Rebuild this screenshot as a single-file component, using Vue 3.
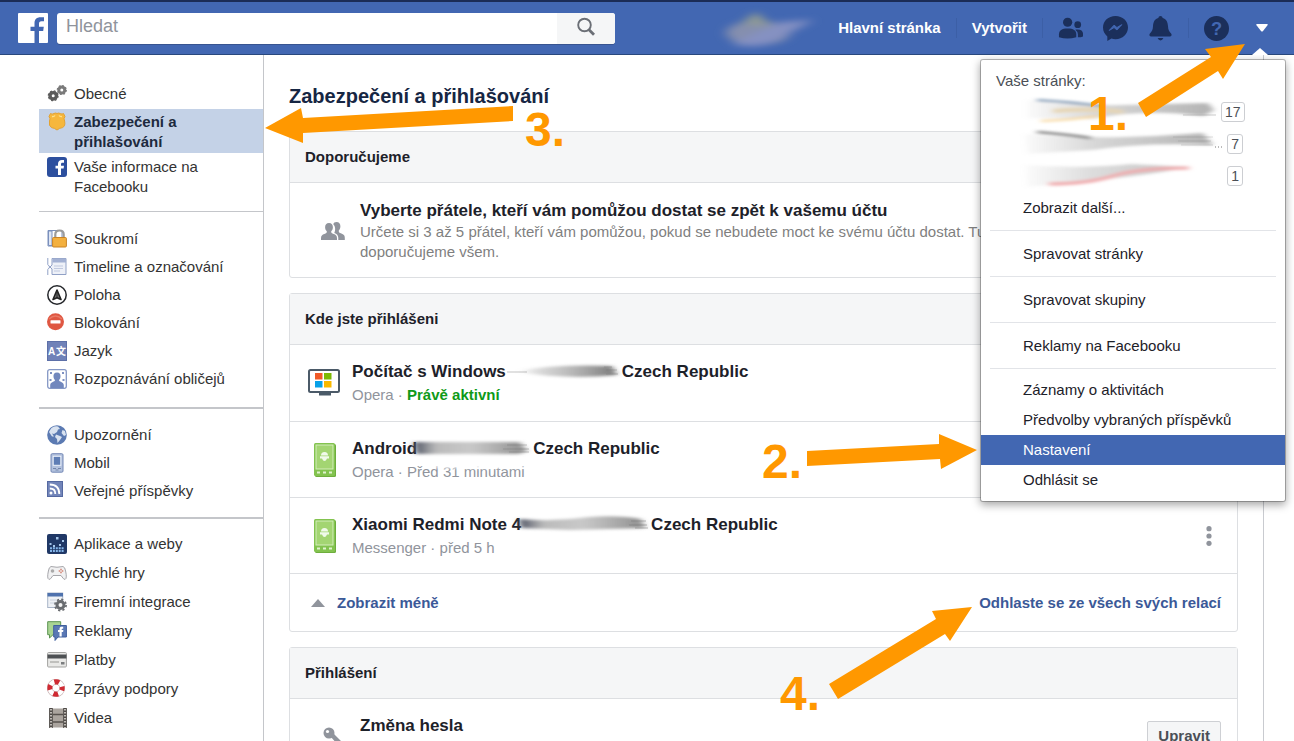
<script setup>
const sections = [
  {
    id: 'general',
    items: [
      { icon: 'gears', label: 'Obecné' },
      { icon: 'badge', label: 'Zabezpečení a přihlašování', active: true },
      { icon: 'facebook', label: 'Vaše informace na Facebooku' },
    ],
  },
  {
    id: 'privacy',
    items: [
      { icon: 'lock', label: 'Soukromí' },
      { icon: 'timeline', label: 'Timeline a označování' },
      { icon: 'location', label: 'Poloha' },
      { icon: 'block', label: 'Blokování' },
      { icon: 'language', label: 'Jazyk' },
      { icon: 'face', label: 'Rozpoznávání obličejů' },
    ],
  },
  {
    id: 'notify',
    items: [
      { icon: 'globe', label: 'Upozornění' },
      { icon: 'mobile', label: 'Mobil' },
      { icon: 'rss', label: 'Veřejné příspěvky' },
    ],
  },
  {
    id: 'apps',
    items: [
      { icon: 'apps', label: 'Aplikace a weby' },
      { icon: 'gamepad', label: 'Rychlé hry' },
      { icon: 'business', label: 'Firemní integrace' },
      { icon: 'ads', label: 'Reklamy' },
      { icon: 'card', label: 'Platby' },
      { icon: 'support', label: 'Zprávy podpory' },
      { icon: 'film', label: 'Videa' },
    ],
  },
]

const sessions = [
  { id: 'pc', device: 'Počítač s Windows', place: 'Czech Republic', app: 'Opera', when: 'Právě aktivní', active: true },
  { id: 'android', device: 'Android', place: 'Czech Republic', app: 'Opera', when: 'Před 31 minutami' },
  { id: 'xiaomi', device: 'Xiaomi Redmi Note 4', place: 'Czech Republic', app: 'Messenger', when: 'před 5 h' },
]

const single = ['Spravovat stránky', 'Spravovat skupiny', 'Reklamy na Facebooku']
const account = ['Záznamy o aktivitách', 'Předvolby vybraných příspěvků', 'Nastavení', 'Odhlásit se']
</script>

<template>
  <div class="page">
    <svg class="sprite" aria-hidden="true">
      <defs>
        <filter id="soft" x="-20%" y="-60%" width="140%" height="220%"><feGaussianBlur stdDeviation="3 1.4" /></filter>
        <filter id="softer" x="-30%" y="-60%" width="160%" height="220%"><feGaussianBlur stdDeviation="6 3" /></filter>
        <linearGradient id="streak"><stop offset="0" stop-color="#888" stop-opacity="0" /><stop offset=".35" stop-color="#aaa" stop-opacity=".6" /><stop offset="1" stop-color="#777" /></linearGradient>
        <linearGradient id="streakDark"><stop offset="0" stop-color="#4a5060" /><stop offset=".2" stop-color="#aaa" stop-opacity=".8" /><stop offset=".5" stop-color="#bbb" stop-opacity=".8" /><stop offset="1" stop-color="#8c8c8c" /></linearGradient>
        <linearGradient id="pageFade"><stop offset="0" stop-color="#aaa" stop-opacity=".05" /><stop offset=".4" stop-color="#aaa" stop-opacity=".5" /><stop offset="1" stop-color="#999" stop-opacity=".75" /></linearGradient>
      </defs>
      <symbol id="i-gears" viewBox="0 0 20 20">
        <circle cx="6.2" cy="11.8" r="3.2" fill="none" stroke="#5c5c5c" stroke-width="3.4" />
        <circle cx="6.2" cy="11.8" r="4.9" fill="none" stroke="#5c5c5c" stroke-width="1.2" stroke-dasharray="2 1.85" />
        <circle cx="14.8" cy="6" r="3" fill="none" stroke="#7a7a7a" stroke-width="3" />
        <circle cx="14.8" cy="6" r="4.500" fill="none" stroke="#7a7a7a" stroke-width="1.2" stroke-dasharray="1.8 1.7" />
      </symbol>
      <symbol id="i-badge" viewBox="0 0 20 20">
        <path d="M3.5 1.5Q5 2.800 7 1.500Q8.500 .6 10 1.500Q11.500 .6 13.500 1.600Q15 2.600 16.500 1.500L18 4.500Q16.300 6.500 17.600 9Q18.700 14 15.500 15.600Q12.500 16 10 18Q7.500 16 4.500 15.600Q1.500 14 2.500 9Q3.700 6.500 2 4.500Z" fill="#f6b73c" stroke="#e3a233" />
        <path d="M5 4.500Q7 5 8 3.500M12 3.500Q13 5 15 4.500" fill="none" stroke="#ffe08a" stroke-width="1.300" />
      </symbol>
      <symbol id="i-facebook" viewBox="0 0 20 20">
        <rect width="20" height="20" rx="3" fill="#2c4f9e" />
        <path d="M11 18v-6.500H8.500V8.800H11V7c0-2.800 1.500-4 4-4h2v2.700h-1.500c-1.200 0-1.500.5-1.500 1.600v1.500h3l-.4 2.700H14V18z" fill="#fff" />
      </symbol>
      <symbol id="i-lock" viewBox="0 0 20 20">
        <path d="M1 1.500h14v15.500H1z" fill="#fff" stroke="#7b90bd" />
        <path d="M1.500 2h3.500v14.500H1.500z" fill="#dfe6f3" stroke="#7b90bd" />
        <path d="M8.300 10V5.500q0-4 4.200-4t4.200 4V10" fill="none" stroke="#9b9b9b" stroke-width="2.200" />
        <rect x="5.600" y="8.500" width="13.800" height="9.500" rx="1" fill="#f3b03f" stroke="#c98325" />
      </symbol>
      <symbol id="i-timeline" viewBox="0 0 20 20">
        <path d="M.8 1v6.500L3 10 .8 12.500V18M5 1.500h14v16H5V12l-2-2 2-2z" fill="#eef1f8" stroke="#91a1c6" />
        <path d="M5.500 1.500h13.500v4H5.500z" fill="#a3b1d3" />
        <path d="M7 9h9M7 11.500h9M7 14h6" stroke="#c0c9df" />
      </symbol>
      <symbol id="i-location" viewBox="0 0 20 20">
        <circle cx="10" cy="10" r="9.200" fill="#fff" stroke="#25272b" stroke-width="1.500" />
        <path d="M10 5L14 14.500 10 12.800 6 14.500z" fill="#777" stroke="#222" stroke-width="1.600" stroke-linejoin="round" />
        <path d="M10 5v8" stroke="#222" />
      </symbol>
      <symbol id="i-block" viewBox="0 0 20 20">
        <circle cx="8.500" cy="8.800" r="8.500" fill="#df5742" />
        <path d="M2 6Q8.500 0 15 6" fill="none" stroke="#ea7a66" stroke-width="1.500" />
        <rect x="3.500" y="7.200" width="10" height="3.300" rx=".5" fill="#fff" />
      </symbol>
      <symbol id="i-face" viewBox="0 0 20 20">
        <rect x=".7" y=".7" width="18.600" height="18.600" rx="2" fill="#fff" stroke="#8497c5" stroke-width="1.300" />
        <path d="M10 3.500c2.800 0 3.700 2 3.500 4.200-.2 1.800-.8 2.500-1.500 3.300 0 2 4.300 1.500 4.800 5V19H3.200v-3c.5-3.500 4.800-3 4.800-5-.7-.8-1.300-1.500-1.500-3.300C6.300 5.500 7.200 3.500 10 3.500z" fill="#7187bd" />
        <path d="M3 3h2v2H3zM15 3h2v2h-2zM2.500 10h2v2h-2zM15.500 10h2v2h-2z" fill="#7e91c2" />
      </symbol>
      <symbol id="i-globe" viewBox="0 0 20 20">
        <circle cx="10" cy="10" r="9.800" fill="#5b7ab2" />
        <path d="M4 3.500Q7 .5 11 1.500L13 4l-2 .5-1 2.500-3 2-2-.5 2 3H5L2 7zM9 9.500l4 1.500 2 1-2 3-2.500 3-.5-4-2-2zM15.500 5L18 6l1 4-2 1-2.500-3z" fill="#d8e2f0" />
      </symbol>
      <symbol id="i-mobile" viewBox="0 0 20 20">
        <rect x="4" y=".7" width="12" height="18.500" rx="1.200" fill="#b3c2de" stroke="#7387b5" />
        <rect x="6.200" y="3.300" width="7.600" height="9" fill="#5e7db5" stroke="#edf2fa" />
        <path d="M6 15.500h3M11 15.500h3M8.500 17h3" stroke="#7385ac" />
      </symbol>
      <symbol id="i-rss" viewBox="0 0 20 20">
        <rect x=".5" y=".5" width="15" height="15" fill="#7285b9" stroke="#5569a1" />
        <circle cx="4" cy="12" r="1.500" fill="#fff" />
        <path d="M2.800 7.500Q8.300 7.500 8.300 13M2.800 3.500Q12.300 3.500 12.300 13" fill="none" stroke="#fff" stroke-width="1.800" />
      </symbol>
      <symbol id="i-apps" viewBox="0 0 20 20">
        <rect width="20" height="20" rx="2" fill="#203866" />
        <path d="M9 3h2.500v2.500H9zM15 6h2v2h-2zM2.500 9h2v2h-2zM6 11h2v2H6zM12 10h2v2h-2z" fill="#a5c6ea" />
        <path d="M3 14.300h14M3 17h14" stroke="#83b4e8" stroke-width="2" stroke-dasharray="2 .9" />
      </symbol>
      <symbol id="i-gamepad" viewBox="0 0 20 20">
        <path d="M4 3.500Q10 5 16 3.500 18 4 18.600 8 20.300 15.500 18 16.500 16.500 16.500 14 12.500H6Q3.500 16.500 2 16.500-.3 15.500 1.400 8 2 4 4 3.500z" fill="#f1f1f2" stroke="#a6a6aa" />
        <circle cx="5.500" cy="8" r="1.800" fill="#aaa" />
        <path d="M14 5.700v4.600M11.700 8h4.600" stroke="#d48170" stroke-width="1.500" stroke-dasharray="1.500 1.600" />
      </symbol>
      <symbol id="i-business" viewBox="0 0 20 20">
        <rect x=".7" y="1" width="15" height="14.500" fill="#eef1f5" stroke="#a9b5c8" />
        <path d="M.5 1h15.500v3.500H.5z" fill="#4f72ad" />
        <path d="M3 8h6M3 11h4" stroke="#cbd2de" />
        <circle cx="13.500" cy="13" r="3.500" fill="#f4f4f4" stroke="#696c70" stroke-width="3" />
        <circle cx="13.500" cy="13" r="5.600" fill="none" stroke="#696c70" stroke-width="1.700" stroke-dasharray="2.200 2.200" />
      </symbol>
      <symbol id="i-ads" viewBox="0 0 20 20">
        <path d="M.7 .7h13v13H6L2.500 17v-3.300H.7z" fill="#a9d493" stroke="#5c9352" />
        <path d="M6.700 4.500h12.700v11.500H11l-3 3.500V16H6.700z" fill="#5a78b4" stroke="#40609f" />
        <path d="M12.500 15.500V11H11V9h1.500V8c0-1.600.9-2.200 2.500-2.200h1.200v1.900H15.400c-.6 0-.7.200-.7.700V9h1.700l-.3 2h-1.400v4.500z" fill="#fff" />
      </symbol>
      <symbol id="i-card" viewBox="0 0 20 20">
        <rect x=".6" y="2.500" width="18.800" height="14.500" rx="1" fill="#e9e9e7" stroke="#a3a3a1" />
        <path d="M.5 4.500h19v4H.5z" fill="#4e5154" />
        <path d="M3 12h9" stroke="#c0c0bd" stroke-width="2" />
        <rect x="14" y="12" width="3.500" height="2.500" fill="#7b7d7f" />
      </symbol>
      <symbol id="i-support" viewBox="0 0 20 20">
        <circle cx="9" cy="9" r="6.200" fill="none" stroke="#c9b3b3" stroke-width="5.800" />
        <circle cx="9" cy="9" r="6.200" fill="none" stroke="#fff" stroke-width="4.600" />
        <circle cx="9" cy="9" r="6.200" fill="none" stroke="#cf2a32" stroke-width="5" stroke-dasharray="4.870 4.870" stroke-dashoffset="2.430" />
      </symbol>
      <symbol id="i-film" viewBox="0 0 20 20">
        <rect x="2" y=".5" width="18" height="19" fill="#aaa49e" />
        <path d="M4 0v20M18 0v20" stroke="#4e4a47" stroke-width="3.600" />
        <path d="M4 1v19M18 1v19" stroke="#ddd8d2" stroke-width="1.600" stroke-dasharray="1.500 1.500" />
        <path d="M6 6.500h10M6 14h10" stroke="#57524e" stroke-width="1.500" />
      </symbol>
      <symbol id="i-friends" viewBox="0 0 24 20">
        <path d="M8 2c2.600 0 3.900 1.900 3.900 4.200 0 1.800-.8 3.200-1.700 4.100-.2 1.600.6 2.100 2.500 2.700 2 .7 3.300 1.600 3.300 4.200V19H0v-1.800c0-2.600 1.300-3.500 3.300-4.200 1.900-.6 2.700-1.100 2.500-2.700C4.900 9.400 4.100 8 4.100 6.200 4.100 3.900 5.400 2 8 2z" />
        <path d="M15.500 1c2.600 0 3.900 1.900 3.900 4.200 0 1.800-.7 3.300-1.600 4.300-.3 1.600.5 2.400 2.600 3.100 2.100.8 3.400 1.700 3.400 4.200V19h-6.500v-2c0-2.600-1.500-4.200-4-5 1.200-2.300 1.400-6.600-1-8.800C12.700 1.800 13.700 1 15.500 1z" />
      </symbol>
    </svg>

    <header class="topbar">
      <a class="logo" href="#" aria-label="Facebook">
        <svg viewBox="0 0 30 30"><rect width="30" height="30" rx="1" fill="#fff" /><path d="M16.500 30V18H12.500v-4.300h4V10.200c0-4 2.300-6 6-6h3.500v4h-2.500c-2 0-2.500.9-2.500 2.500v3h4.800L25.200 18H21v12z" fill="#4267b2" /></svg>
      </a>
      <form class="search" role="search" @submit.prevent>
        <input type="text" placeholder="Hledat" aria-label="Hledat" />
        <button type="submit" aria-label="Vyhledat">
          <svg viewBox="0 0 20 20"><circle cx="8.500" cy="8" r="6.300" fill="none" stroke="#6b6f76" stroke-width="1.900" /><path d="M13 12.700l5 5" stroke="#6b6f76" stroke-width="2.800" /></svg>
        </button>
      </form>
      <nav class="topnav" aria-label="Hlavní">
        <svg class="profile-blur" viewBox="0 0 92 40" aria-hidden="true">
          <g filter="url(#softer)"><ellipse cx="34" cy="25" rx="32" ry="12" fill="#858fae" /><path d="M16 16l16-12 16 14z" fill="#8f9a94" /><path d="M8 36q30 6 44-4l38-20-34 2z" fill="#8591c2" /></g>
        </svg>
        <a class="home" href="#">Hlavní stránka</a>
        <i class="sep"></i>
        <a href="#">Vytvořit</a>
        <i class="sep"></i>
        <div class="tools">
          <button class="tool" aria-label="Žádosti o přátelství">
            <svg viewBox="0 0 26 26"><circle cx="10" cy="6.500" r="4.800" /><path d="M1 22v-3c0-4 3-6 9-6s9 2 9 6v3q-9 3-18 0z" /><circle cx="20.500" cy="9" r="3.500" /><path d="M18 14.300c5-.8 8 1 8 4v3q-2.500 1-5.300.9V19q0-2.700-2.700-4.700z" /></svg>
          </button>
          <button class="tool" aria-label="Zprávy">
            <svg viewBox="0 0 26 26"><path d="M13 0C5.500 0 0 5.300 0 12c0 3.800 1.700 7 4.500 9.200V26l4.300-2.500c1.300.4 2.700.6 4.200.6 7.400 0 13-5.400 13-12.100S20.400 0 13 0z" /><path d="M6.500 15l5-5.500 3 2.500 5-3-5 5.500-3-2.500z" fill="#4267b2" stroke="#4267b2" /></svg>
          </button>
          <button class="tool" aria-label="Upozornění">
            <svg viewBox="0 0 26 26"><path d="M13 0q2 0 2.300 2.200c4 1.200 5.300 4.500 5.500 8.500.2 4 1.200 5.500 3.200 7.500 1 1.200.8 3-1 3H3c-1.800 0-2-1.800-1-3 2-2 3-3.500 3.200-7.500.2-4 1.500-7.300 5.500-8.500Q11 0 13 0zM10 23h6q-1 2.500-3 2.500T10 23z" /></svg>
          </button>
        </div>
        <i class="sep"></i>
        <button class="tool help" aria-label="Nápověda">
          <svg viewBox="0 0 26 26"><circle cx="13" cy="13" r="13" /><text x="13" y="20" text-anchor="middle">?</text></svg>
        </button>
        <button class="caret" aria-label="Nastavení účtu" aria-expanded="true">
          <svg viewBox="0 0 12 8"><path d="M1 0h10q1.500 0 .5 1.300L7 7q-1 1-2 0L.5 1.300Q-.5 0 1 0z" fill="#fff" /></svg>
        </button>
      </nav>
    </header>

    <div class="content">
      <aside class="sidebar">
        <ul v-for="s in sections" :key="s.id" :class="['group', s.id]">
          <li v-for="item in s.items" :key="item.icon">
            <a href="#" :class="{ active: item.active }">
              <svg v-if="item.icon === 'language'" class="icon" viewBox="0 0 20 20" aria-hidden="true"><rect x=".5" y=".5" width="19" height="19" fill="#7082b8" stroke="#5d70a8" /><text x="1" y="14">A</text><text x="9" y="14">文</text></svg>
              <svg v-else class="icon" aria-hidden="true"><use :href="'#i-' + item.icon" /></svg>
              <span>{{ item.label }}</span>
            </a>
          </li>
        </ul>
      </aside>

      <main>
        <h1>Zabezpečení a přihlašování</h1>

        <section class="card">
          <h2>Doporučujeme</h2>
          <div class="setting">
            <svg class="setting-icon" viewBox="0 0 24 20" aria-hidden="true"><use href="#i-friends" /></svg>
            <div class="setting-text">
              <h3>Vyberte přátele, kteří vám pomůžou dostat se zpět k vašemu účtu</h3>
              <p>Určete si 3 až 5 přátel, kteří vám pomůžou, pokud se nebudete moct ke svému účtu dostat. Tuto možnost doporučujeme všem.</p>
            </div>
          </div>
        </section>

        <section class="card">
          <h2>Kde jste přihlášeni</h2>
          <div v-for="s in sessions" :key="s.id" :class="['session', s.id]">
            <svg v-if="s.id === 'pc'" class="device" viewBox="0 0 32 34" aria-hidden="true">
              <rect x="1" y="4" width="30" height="22" rx="1.500" fill="#fff" stroke="#4b5a68" stroke-width="2" />
              <path d="M12 26h10v2.500H12zM2 26h28" fill="#4b5a68" stroke="#4b5a68" stroke-width="2" />
              <path d="M7 7h7.500v6.500H7z" fill="#f05a28" /><path d="M16 7h7.500v6.500H16z" fill="#7db904" /><path d="M7 15h7.500v6.500H7z" fill="#08a1e8" /><path d="M16 15h7.500v6.500H16z" fill="#f9b900" />
            </svg>
            <svg v-else class="device" viewBox="0 0 32 34" aria-hidden="true">
              <rect x="7" y="1" width="21" height="33" rx="1.500" fill="#6eae3d" /><rect x="6" y="0" width="21" height="33" rx="1.500" fill="#83c34f" /><rect x="8" y="2" width="17" height="24" fill="#a3d572" stroke="#d4edbb" />
              <path d="M13 12.500q0-3.500 3.500-3.500t3.500 3.500zM12 13.300h9v2.200h-2q-1 2.500-2.500 2.500t-2.500-2.500h-2z" fill="#f0faea" /><path d="M9 29.500h3M15 29.500h3M21 29.500h3" stroke="#dff2ce" stroke-width="2" />
            </svg>
            <div class="session-text">
              <h3>
                <span>{{ s.device }}</span>
                <svg v-if="s.id === 'pc'" class="smudge" viewBox="0 0 116 22" aria-hidden="true"><g filter="url(#soft)"><path d="M12 11Q50 4 106 6l5 9Q60 20 12 12z" fill="url(#streak)" /></g><path d="M1 12h20M98 7h8M100 10h11M100 14h12" stroke="#777" stroke-opacity=".45" /></svg>
                <svg v-else-if="s.id === 'android'" class="smudge" viewBox="0 0 116 22" aria-hidden="true"><g filter="url(#soft)"><path d="M-3 5H103l7 9-8 3H-1z" fill="url(#streakDark)" /><path d="M18 27h88v4H18z" fill="#fff" /><path d="M18 27h88v4H18z" fill="#fff" /></g><path d="M90 8h20M86 12h26M92 15h20" stroke="#777" stroke-opacity=".45" /></svg>
                <svg v-else class="smudge wide" viewBox="0 0 130 22" aria-hidden="true"><g filter="url(#soft)"><path d="M-2 6Q32 9 68 4Q98 2 120 6l4 9Q90 16 50 17L0 15z" fill="url(#streakDark)" /></g><path d="M110 8h15M108 12h18M114 15h13" stroke="#777" stroke-opacity=".5" /></svg>
                <span>{{ s.place }}</span>
              </h3>
              <p>{{ s.app }} · <b v-if="s.active">{{ s.when }}</b><template v-else>{{ s.when }}</template></p>
            </div>
            <button v-if="!s.active" class="more" aria-label="Další možnosti"><svg viewBox="0 0 6 20"><circle cx="3" cy="2.700" r="2.600" /><circle cx="3" cy="10" r="2.600" /><circle cx="3" cy="17.300" r="2.600" /></svg></button>
          </div>
          <div class="card-foot">
            <a href="#" class="less"><svg viewBox="0 0 14 8" aria-hidden="true"><path d="M7 0l7 8H0z" fill="#90949c" /></svg>Zobrazit méně</a>
            <a href="#">Odhlaste se ze všech svých relací</a>
          </div>
        </section>

        <section class="card">
          <h2>Přihlášení</h2>
          <div class="setting password">
            <svg class="setting-icon" viewBox="0 0 24 24" aria-hidden="true"><circle cx="8" cy="7" r="5.500" /><path d="M10 11l3-3 11 11v5h-5v-3h-3v-3z" /><circle cx="6.500" cy="5.500" r="1.600" fill="#fff" /></svg>
            <div class="setting-text"><h3>Změna hesla</h3></div>
            <button class="edit">Upravit</button>
          </div>
        </section>
      </main>
    </div>

    <div class="menu">
      <p class="menu-title">Vaše stránky:</p>
      <a class="menu-page" href="#">
        <svg viewBox="0 0 198 32" aria-hidden="true"><g filter="url(#soft)"><path d="M4 4Q60 10 100 9T185 7l6 7-10 6Q120 12 70 23L4 22z" fill="url(#pageFade)" /><path d="M14 4Q50 6 80 10" fill="none" stroke="#6f8cab" stroke-width="2" /><path d="M30 15Q70 12 100 16" fill="none" stroke="#e6d5b5" stroke-width="4" /><path d="M18 25Q50 24 74 20" fill="none" stroke="#f8d79b" stroke-width="2" /></g><path d="M160 19h33" stroke="#999" stroke-opacity=".5" /></svg>
        <span class="count">17</span>
      </a>
      <a class="menu-page" href="#">
        <svg viewBox="0 0 198 32" aria-hidden="true"><g filter="url(#soft)"><path d="M2 6Q60 10 100 9T180 5l10 12Q120 14 70 22L4 26z" fill="url(#pageFade)" /><path d="M14 4Q50 7 68 10" fill="none" stroke="#666" stroke-width="2" /></g><path d="M150 9h40M155 13h33M158 17h32" stroke="#888" stroke-opacity=".3" /><path d="M192 19h9" stroke="#777" stroke-dasharray="1 2" /></svg>
        <span class="count">7</span>
      </a>
      <a class="menu-page" href="#">
        <svg viewBox="0 0 198 32" aria-hidden="true"><g filter="url(#soft)"><path d="M2 5Q60 9 108 4L166 7q-40 8-90 13L4 27z" fill="url(#pageFade)" fill-opacity=".8" /><path d="M26 24Q65 24 90 16T166 8" fill="none" stroke="#f0a8aa" stroke-width="3" /></g></svg>
        <span class="count">1</span>
      </a>
      <a class="menu-item" href="#">Zobrazit další...</a>
      <template v-for="label in single" :key="label">
        <hr />
        <a class="menu-item" href="#">{{ label }}</a>
      </template>
      <hr class="last" />
      <a v-for="label in account" :key="label" :class="['menu-item', { selected: label === 'Nastavení' }]" href="#">{{ label }}</a>
    </div>

    <svg class="notes notes-left" viewBox="0 0 320 60">
      <path d="M5 28L41 8 43 18 253 6V21L43 33V43z" /><text x="265" y="46">3.</text>
    </svg>
    <svg class="notes notes-right" viewBox="0 0 554 741">
      <path d="M398 103L471 57 465 49 505 44 483 79 478 71 406 117z" /><text x="348" y="130">1.</text>
      <path d="M67 451L199 444V434L237 450 201 469 200 459 67 466z" /><text x="22" y="478">2.</text>
      <path d="M89 684L196 619 192 611 232 607 210 641 205 634 98 699z" /><text x="40" y="710">4.</text>
    </svg>
  </div>
</template>

<style>
body { margin: 0; background: #fff; }
</style>

<style scoped>
* { box-sizing: border-box; }
.page { position: relative; display: flex; flex-direction: column; height: 100vh; overflow: hidden; font: 15px/20px "Liberation Sans", Arial, sans-serif; color: #1d2129; }
a { color: inherit; text-decoration: none; }
button { font: inherit; cursor: pointer; padding: 0; border: 0; background: none; }
ul, p, h1, h2, h3 { margin: 0; padding: 0; list-style: none; }
svg { display: block; flex: none; }
.sprite { position: absolute; width: 0; height: 0; }

.topbar { flex: none; display: flex; align-items: center; height: 55px; padding: 0 26px 0 18px; background: #4267b2; border-top: 2px solid #1b2c56; border-bottom: 1px solid #29487d; }
.logo svg { width: 30px; height: 30px; }
.search { display: flex; width: 558px; height: 31px; margin-left: 9px; border-radius: 3px; overflow: hidden; background: #fff; box-shadow: 0 1px 0 #385490; }
.search input { flex: 1; min-width: 0; padding: 0 9px 4px; border: 0; outline: 0; font: 18px/24px "Liberation Sans", Arial, sans-serif; background: none; }
.search input::placeholder { color: #90949c; opacity: 1; }
.search button { display: flex; justify-content: center; padding-top: 4px; width: 58px; background: #f5f6f7; }
.search button svg { width: 20px; height: 20px; }
.topnav { display: flex; align-items: center; margin-left: auto; color: #fff; font-weight: bold; }
.profile-blur { width: 92px; height: 40px; margin-right: 22px; overflow: visible; }
.sep { width: 1px; height: 20px; margin: 0 15px; background: #3c5fa6; }
.tools { display: flex; gap: 20px; }
.tool svg { width: 25px; height: 25px; fill: #1b2f5b; }
.tool text { font: bold 19px "Liberation Sans", Arial, sans-serif; fill: #4267b2; }
.caret { margin-left: 27px; }
.caret svg { width: 12px; height: 8px; }

.content { flex: 1; min-height: 0; display: flex; margin: 0 30px 0 39px; }
.sidebar { flex: none; width: 225px; padding-top: 25px; border-right: 1px solid #c4c6ca; color: #333; }
.group a { display: flex; gap: 7px; padding: 4px 8px; }
.group .icon { width: 20px; height: 20px; }
.icon text { font: bold 10px "Liberation Sans", "Noto Sans CJK SC", sans-serif; fill: #fff; }
.general { padding-bottom: 11px; border-bottom: 1px solid #c4c6ca; }
.general li + li a { padding: 2px 8px; }
.general li:first-child { padding-bottom: 1px; }
.general li:last-child { padding: 2px 0 1px; }
.general li .active { padding: 3px 8px 1px; }
.group .active { background: #c4d2e7; font-weight: bold; color: #1d2a3e; }
.privacy { padding: 13px 0 14px; border-bottom: 2px solid #c4c6ca; }
.notify { padding: 12px 0; border-bottom: 2px solid #c4c6ca; }
.apps { display: flex; flex-direction: column; gap: 1px; padding-top: 11px; }

main { flex: 1; min-width: 0; padding: 29px 25px 0; border-right: 1px solid #c9cbd0; }
h1 { margin-bottom: 23px; font-size: 20px; line-height: 24px; color: #162643; }
.card { margin-bottom: 15px; border: 1px solid #dddfe2; border-radius: 3px; background: #fff; }
h2 { padding: 15px; font-size: 15px; line-height: 20px; background: #f5f6f7; border-bottom: 1px solid #dddfe2; }
h3 { font-size: 17px; line-height: 22px; }
.setting { display: flex; align-items: center; padding: 17px 16px 15px 31px; }
.setting-icon { width: 24px; height: 24px; fill: #90949c; }
.setting-text { flex: 1; min-width: 0; margin-left: 15px; }
.setting-text p { max-width: 700px; line-height: 20px; color: #7f7f7f; }
.edit { height: 30px; padding: 0 10px; border: 1px solid #ced0d4; border-radius: 2px; background: #f5f6f7; color: #4b4f56; font-weight: bold; }
.password { align-items: flex-start; padding-top: 16px; }
.password .setting-icon { margin-top: 11px; }
.password .edit { margin-top: 6px; }
.session { display: flex; align-items: center; height: 76px; padding: 0 25px 0 18px; border-bottom: 1px solid #dddfe2; }
.session.pc { height: 77px; }
.device { width: 32px; height: 34px; }
.session-text { flex: 1; margin-left: 12px; }
.session-text h3 { display: flex; line-height: 23px; }
.smudge { position: relative; width: 116px; height: 22px; overflow: visible; }
.smudge.wide { width: 130px; }
.session-text p { line-height: 23px; color: #90949c; }
.session-text b { color: #0e9a18; }
.more svg { width: 6px; height: 20px; fill: #90949c; }
.card-foot { display: flex; justify-content: space-between; align-items: center; height: 57px; padding: 0 16px 0 21px; font-weight: bold; color: #3b5998; }
.less { display: flex; align-items: center; gap: 12px; }
.less svg { width: 14px; height: 8px; }

.menu { position: absolute; top: 59px; right: 8px; width: 306px; padding: 6px 0; border: 1px solid rgba(0, 0, 0, .25); border-radius: 3px; background: #fff; background-clip: padding-box; box-shadow: 0 3px 8px rgba(0, 0, 0, .35); }
.menu::before { content: ""; position: absolute; right: 17px; top: -12px; border: 8px solid transparent; border-top: 0; border-bottom: 7px solid #fff; }
.menu-title { padding: 5px 15px; color: #4b4f56; }
.menu-page { display: flex; align-items: center; height: 32px; padding: 0 42px; }
.menu-page svg { width: 198px; height: 32px; overflow: visible; }
.count { margin-left: auto; padding: 0 3px; border: 1px solid #ccced2; border-radius: 3px; font-size: 14px; line-height: 18px; color: #4b4f56; }
.menu-item { display: block; padding: 5px 42px; }
.menu-page + .menu-item { margin-top: 1px; }
.menu hr { height: 1px; margin: 7px 9px 8px; border: 0; background: #e2e4e8; }
.menu hr.last { margin-bottom: 6px; }
.selected { background: #4267b2; color: #fff; }

.notes { position: absolute; pointer-events: none; fill: #ff9800; }
.notes text { font: bold 48px "Liberation Sans", Arial, sans-serif; }
.notes-left { left: 260px; top: 100px; width: 320px; height: 60px; }
.notes-right { right: 0; top: 0; width: 554px; height: 741px; }
</style>
